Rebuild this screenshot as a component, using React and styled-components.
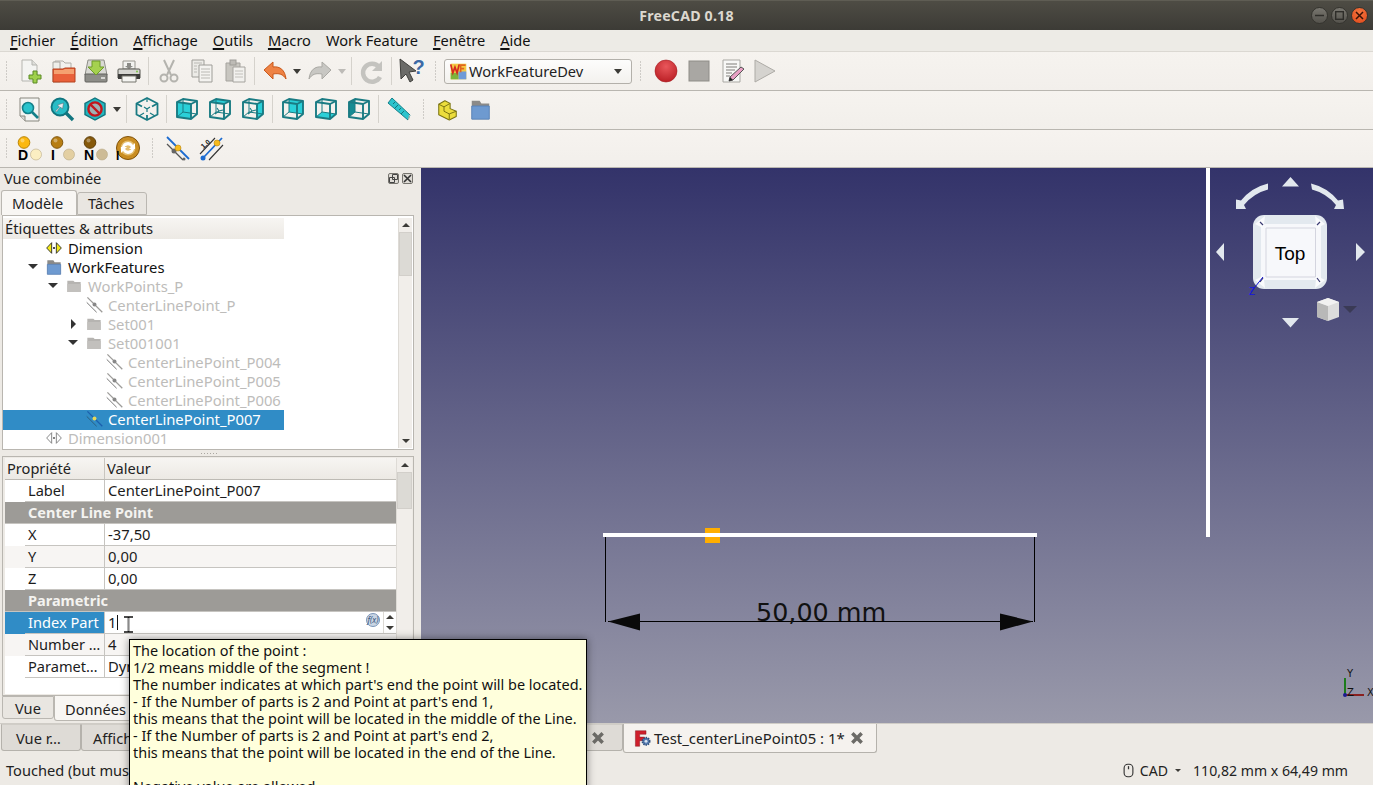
import React from 'react';
import styled, { createGlobalStyle } from 'styled-components';

const GlobalStyle = createGlobalStyle`
    html, body { margin: 0; padding: 0; background: #edeae5; }
    * { box-sizing: border-box; }
    body { font-family: "Noto Sans", "Open Sans", sans-serif; font-size: 14.6px; color: #1a1a1a; }
`;

const Window = styled.div`
    position: relative;
    width: 1373px;
    height: 785px;
    overflow: hidden;
    display: flex;
    flex-direction: column;
    background: #edeae5;
`;

/* title bar */
const TitleBar = styled.div`
    height: 30px;
    flex: none;
    display: grid;
    grid-template-columns: 1fr auto 1fr;
    align-items: center;
    background: linear-gradient(#4e4c44, #3c3b36);
    border-top: 1px solid #5f5d54;
`;
const TitleText = styled.div`
    grid-column: 2;
    color: #dcd8cf;
    font-weight: 700;
    font-size: 14.2px;
    letter-spacing: 0.2px;
`;
const WinButtons = styled.div`
    justify-self: end;
    display: flex;
    gap: 3px;
    padding-right: 5px;
`;
const WinButton = styled.div`
    width: 17px;
    height: 17px;
    border-radius: 50%;
    display: flex;
    align-items: center;
    justify-content: center;
    background: ${p => p.$close ? 'radial-gradient(circle at 50% 30%, #f4763f, #e0481a)' : 'linear-gradient(#78766f, #54524c)'};
    border: 1px solid #35342f;
`;

/* menu */
const MenuBar = styled.div`
    height: 22px;
    flex: none;
    display: flex;
    align-items: center;
    padding: 0 0 2px 10px;
    gap: 15px;
    background: #edebe6;
    border-bottom: 1px solid #dbd8d2;
`;
const MenuItem = styled.div`
    color: #111;
    line-height: 20px;
    u { text-decoration-thickness: 2px; text-underline-offset: 2px; }
`;

/* toolbars */
const Toolbar = styled.div`
    height: ${p => p.$h || 39}px;
    flex: none;
    display: flex;
    align-items: center;
    padding-bottom: ${p => p.$pb || 0}px;
    background: linear-gradient(#f6f3ef, #f2efeb);
    border-bottom: 1px solid #b9b6b0;
`;
const ToolButton = styled.div`
    width: 33px;
    height: 30px;
    flex: none;
    display: flex;
    align-items: center;
    justify-content: center;
`;
const ToolSep = styled.div`
    width: 7px;
    height: 28px;
    flex: none;
    display: flex;
    justify-content: center;
    &::before { content: ""; width: 1px; background: #d5d2cc; }
`;
const Grip = styled.div`
    width: ${p => p.$w || 14}px;
    height: 20px;
    flex: none;
    background-image: radial-gradient(circle, #a8a5a0 0.7px, transparent 0.9px);
    background-size: 3px 3px;
    background-repeat: repeat-y;
    background-position: center;
`;
const DropArrow = styled.div`
    width: 12px;
    flex: none;
    display: flex;
    justify-content: center;
    &::before {
        content: "";
        border-left: 4.5px solid transparent;
        border-right: 4.5px solid transparent;
        border-top: 5px solid ${p => p.$off ? '#bdbbb7' : '#3c3b37'};
    }
`;
const Combo = styled.div`
    width: 188px;
    height: 25px;
    margin-left: 2px;
    flex: none;
    display: flex;
    align-items: center;
    gap: 2px;
    padding: 0 9px 0 5px;
    border: 1px solid #b3b0aa;
    border-radius: 3px;
    background: linear-gradient(#fdfdfc, #f3f1ee);
    color: #222;
`;
const ComboLabel = styled.span`
    flex: 1;
`;
const ComboArrow = styled(DropArrow)`
    width: 9px;
`;
const Icon = styled.svg.attrs({ viewBox: '0 0 24 24' })`
    width: ${p => p.$s || 24}px;
    height: ${p => p.$s || 24}px;
    display: block;
    flex: none;
    overflow: visible;
`;

/* main area */
const Main = styled.div`
    flex: none;
    height: 555px;
    display: flex;
`;
const LeftPanel = styled.div`
    width: 421px;
    flex: none;
    display: flex;
    flex-direction: column;
    background: #edeae5;
`;
const DockHeader = styled.div`
    height: 22px;
    flex: none;
    display: flex;
    align-items: center;
    padding: 0 8px 2px 4px;
    color: #222;
`;
const DockTitle = styled.div`
    flex: 1;
`;
const DockBtn = styled.div`
    width: 11px;
    height: 11px;
    margin-left: 3px;
    display: flex;
    align-items: center;
    justify-content: center;
    border: 1px solid #77756f;
    border-radius: 2px;
    background: #dedbd5;
`;
const TabRow = styled.div`
    height: ${p => p.$h}px;
    flex: none;
    display: flex;
    align-items: ${p => p.$bottom ? 'flex-start' : 'flex-end'};
    padding-left: ${p => p.$pad}px;
`;
const Tab = styled.div`
    width: ${p => p.$w}px;
    height: ${p => p.$active ? 25 : 23}px;
    flex: none;
    display: flex;
    align-items: center;
    padding-left: ${p => p.$tx}px;
    border: 1px solid #bab7b1;
    background: ${p => p.$active ? '#f8f6f3' : '#e9e6e1'};
    color: #222;
    ${p => p.$bottom
        ? `border-top: ${p.$active ? 'none' : '1px solid #bab7b1'}; border-radius: 0 0 3px 3px; padding-top: ${p.$active ? 1 : 0}px;`
        : `border-bottom: ${p.$active ? 'none' : '1px solid #bab7b1'}; border-radius: 3px 3px 0 0; padding-bottom: 1px;`}
`;
const TreeBox = styled.div`
    height: 235px;
    flex: none;
    width: 412px;
    margin-left: 2px;
    display: flex;
    padding: 2px 1px 1px 0;
    border: 1px solid #b9b6b0;
    background: #fff;
    font-size: 14.8px;
`;
const TreeInner = styled.div`
    flex: 1;
    overflow: hidden;
`;
const TreeHead = styled.div`
    width: 281px;
    height: 21px;
    padding-left: 2px;
    line-height: 21px;
    background: linear-gradient(#f7f5f2, #ece9e4);
    color: #222;
`;
const TreeRow = styled.div`
    width: 281px;
    height: ${p => p.$selected ? 19.5 : 19}px;
    display: flex;
    align-items: center;
    padding-left: ${p => 23 + 20 * p.$depth}px;
    padding-bottom: 2px;
    background: ${p => p.$selected ? '#308cc6' : 'transparent'};
    color: ${p => p.$selected ? '#fff' : p.$dim ? '#bdbcba' : '#111'};
`;
const Twist = styled.div`
    width: 14px;
    flex: none;
    display: flex;
    justify-content: center;
    &::before {
        content: "";
        ${p => p.$kind === 'open' && `
            border-left: 5px solid transparent;
            border-right: 5px solid transparent;
            border-top: 5px solid #333;`}
        ${p => p.$kind === 'closed' && `
            border-top: 5px solid transparent;
            border-bottom: 5px solid transparent;
            border-left: 5px solid #333;`}
    }
`;
const TreeIcon = styled.div`
    width: 18px;
    margin: 0 5px;
    flex: none;
    display: flex;
    justify-content: center;
`;
const Scrollbar = styled.div`
    width: ${p => p.$w || 14}px;
    flex: none;
    display: flex;
    flex-direction: column;
    background: #f1eeea;
    border-left: 1px solid #dedbd6;
`;
const ScrollBtn = styled.div`
    height: 14px;
    flex: none;
    display: flex;
    align-items: center;
    justify-content: center;
    ${p => p.$end && 'margin-top: auto;'}
    &::before {
        content: "";
        border-left: 4px solid transparent;
        border-right: 4px solid transparent;
        ${p => p.$end ? 'border-top: 4px solid #3c3b37;' : 'border-bottom: 4px solid #3c3b37;'}
    }
`;
const ScrollThumb = styled.div`
    height: ${p => p.$h}px;
    flex: none;
    background: #dcdad5;
    border: 1px solid #d2cfca;
`;
const SplitGrip = styled.div`
    height: 6px;
    flex: none;
    display: flex;
    justify-content: center;
    align-items: center;
    &::before {
        content: "";
        width: 16px;
        height: 1px;
        margin-left: -4px;
        background-image: linear-gradient(90deg, #aaa7a1 1px, transparent 1px);
        background-size: 3px 1px;
    }
`;
const PropBox = styled.div`
    height: 240px;
    flex: none;
    width: 412px;
    margin-left: 2px;
    display: flex;
    padding: 1px 1px 1px 2px;
    border: 1px solid #b9b6b0;
    background: #edeae5;
`;
const PropTable = styled.div`
    flex: 1;
    background: #fff;
`;
const PropHead = styled.div`
    height: 22px;
    display: grid;
    grid-template-columns: 99px 1fr;
    background: linear-gradient(#f7f5f2, #ece9e4);
    border-bottom: 1px solid #bdbab4;
    color: #222;
    line-height: 21px;
`;
const HeadCell = styled.div`
    padding-left: 2px;
    & + & { border-left: 1px solid #c8c5bf; }
`;
const PropRow = styled.div`
    height: 22px;
    display: grid;
    grid-template-columns: 20px 79px 1fr;
    background: ${p => p.$alt ? '#f7f5f3' : '#fff'};
    color: #1c1c1c;
    line-height: 21px;
`;
const PropGutter = styled.div`
    background: ${p => p.$selected ? '#308cc6' : 'transparent'};
`;
const PropName = styled.div`
    padding-left: 3px;
    white-space: nowrap;
    overflow: hidden;
    border-bottom: 1px solid #c6c4c0;
    background: ${p => p.$selected ? '#308cc6' : 'transparent'};
    color: ${p => p.$selected ? '#fff' : 'inherit'};
`;
const PropValue = styled.div`
    display: flex;
    align-items: center;
    padding-left: 3px;
    border-left: 1px solid #c6c4c0;
    border-bottom: 1px solid #c6c4c0;
    white-space: nowrap;
    font-size: 14.8px;
    background: ${p => p.$editing ? '#fff' : 'transparent'};
`;
const Caret = styled.span`
    width: 1px;
    height: 15px;
    margin-left: 1px;
    background: #111;
`;
const Expr = styled.div`
    margin-left: auto;
    margin-right: 3px;
    margin-top: -5px;
    width: 14px;
    height: 14px;
    border-radius: 50%;
    border: 1px solid #7c96b8;
    background: #c9d5e4;
    color: #39557d;
    font-size: 8px;
    font-style: italic;
    line-height: 11px;
    text-align: center;
`;
const Spin = styled.div`
    width: 13px;
    height: 21px;
    flex: none;
    display: flex;
    flex-direction: column;
    justify-content: space-around;
    align-items: center;
    border-left: 1px solid #dcd9d4;
`;
const SpinArrow = styled.div`
    border-left: 4px solid transparent;
    border-right: 4px solid transparent;
    ${p => p.$down ? 'border-top: 4px solid #3c3b37;' : 'border-bottom: 4px solid #3c3b37;'}
`;
const GroupRow = styled.div`
    height: 22px;
    padding-left: 23px;
    background: #9d9b97;
    border-bottom: 1px solid #c6c4c0;
    color: #f4f3f0;
    font-weight: 700;
    font-size: 14.5px;
    line-height: 21px;
`;

/* 3D view */
const Viewport = styled.div`
    position: relative;
    flex: 1;
    overflow: hidden;
    background: linear-gradient(#33336a, #9999aa);
`;
const Scene = styled.svg`
    position: absolute;
    inset: 0;
    width: 100%;
    height: 100%;
`;

/* document tabs and status */
const DocTabs = styled.div`
    height: 32px;
    flex: none;
    display: flex;
    align-items: flex-start;
    padding-left: 1px;
    background: #edeae5;
    border-top: 1px solid #cfccc6;
`;
const DocTab = styled.div`
    width: ${p => p.$w}px;
    height: ${p => p.$active ? 29 : 27}px;
    flex: none;
    display: flex;
    align-items: center;
    gap: ${p => p.$active ? 3 : 0}px;
    padding: ${p => p.$active ? 0 : 1}px ${p => p.$active ? 12 : 0}px 0 ${p => p.$tx}px;
    background: ${p => p.$active ? '#f5f2ee' : '#dedbd6'};
    border: 1px solid #b5b2ac;
    border-top: ${p => p.$active ? 'none' : '1px solid #d0cdc7'};
    border-radius: 0 0 3px 3px;
    white-space: nowrap;
    overflow: hidden;
    color: #222;
    font-size: ${p => p.$active ? 14.9 : 14.6}px;
`;
const CloseMark = styled.div`
    margin-left: auto;
    flex: none;
`;
const CloseGap = styled.div`
    width: 17px;
    flex: none;
`;
const StatusBar = styled.div`
    flex: 1;
    display: flex;
    align-items: center;
    padding: 0 25px 0 6px;
    color: #222;
    font-size: 14.1px;
`;
const StatusText = styled.div`
    flex: 1;
    font-size: 14.6px;
`;
const StatusItem = styled.div`
    display: flex;
    align-items: center;
    gap: 4px;
    margin-left: ${p => p.$gap || 0}px;
`;
const StatusArrow = styled(DropArrow)`
    width: 20px;
    &::before {
        border-left-width: 3.5px;
        border-right-width: 3.5px;
        border-top-width: 3.5px;
    }
`;

const Tooltip = styled.div`
    position: absolute;
    left: 129px;
    top: 639px;
    width: 458px;
    height: 170px;
    padding: 2px 0 0 3px;
    background: #ffffdc;
    border: 1px solid #000;
    box-shadow: 0 0 8px rgba(0, 0, 0, 0.45);
    color: #111;
    font-size: 14.45px;
    line-height: 17px;
    white-space: pre-line;
`;
const Beam = styled.svg`
    position: absolute;
    left: 123px;
    top: 616px;
    width: 11px;
    height: 17px;
`;

/* toolbar icons */
const NewIcon = () => (
    <Icon>
        <path d="M4 1h10l5 5v16H4z" fill="#f4f4f2" stroke="#b5b5b0" />
        <path d="M14 1v5h5" fill="#dededa" stroke="#b5b5b0" />
        <path d="M15 12h4v4h4v4h-4v4h-4v-4h-4v-4h4z" fill="#9fd04c" stroke="#5b8a24" />
    </Icon>
);
const OpenIcon = () => (
    <Icon>
        <path d="M4 2h8l2 2h6v10H4z" fill="#f2f1ee" stroke="#b0aea8" />
        <path d="M2 3h7v20H2z" fill="#eeeeea" stroke="#a8a6a0" />
        <path d="M2 10h10l2 -1h10v14H2z" fill="#e9603a" stroke="#b4431f" />
        <path d="M3 11h9l2 -1h9v5H3z" fill="#f5a070" />
    </Icon>
);
const SaveIcon = () => (
    <Icon>
        <path d="M4 1h16l3 15H1z" fill="#d9d9d4" stroke="#8e8e88" />
        <path d="M1 15h22v7a1 1 0 0 1 -1 1H2a1 1 0 0 1 -1 -1z" fill="#8d8d88" stroke="#62625e" />
        <path d="M8 2h8v6h4l-8 8 -8 -8h4z" fill="#a5d14f" stroke="#6f9b2b" />
        <rect x="17" y="18" width="4" height="2" fill="#d6d6d2" />
    </Icon>
);
const PrintIcon = () => (
    <Icon>
        <path d="M6 2h12v8H6z" fill="#f2f2ef" stroke="#98968f" />
        <path d="M10 4h4v3h2l-4 3 -4 -3h2z" fill="#8a8a86" />
        <path d="M2 10h20a1 1 0 0 1 1 1v8H1v-8a1 1 0 0 1 1 -1z" fill="#d6d6d2" stroke="#55544f" />
        <path d="M1 15h22v5H1z" fill="#3c3c3a" />
        <path d="M5 17h14v6H5z" fill="#f4f4f1" stroke="#77766f" />
        <circle cx="20" cy="12.5" r="1" fill="#7cc34a" />
    </Icon>
);
const CutIcon = () => (
    <Icon>
        <g fill="none" stroke="#b4b3ae" strokeWidth="2">
            <path d="M7 1l7 15M17 1l-7 15" />
            <ellipse cx="7" cy="19" rx="3.5" ry="3.5" />
            <ellipse cx="17" cy="19" rx="3.5" ry="3.5" />
        </g>
    </Icon>
);
const CopyIcon = () => (
    <Icon>
        <path d="M2 1h12v17H2z" fill="#ecebe7" stroke="#9e9d98" />
        <path d="M9 6h13v17H9z" fill="#f4f3f0" stroke="#9e9d98" />
        <path d="M11 10h9M11 13h9M11 16h9M11 19h9M4 4h8M4 7h3M4 10h3M4 13h3" stroke="#bab9b4" />
    </Icon>
);
const PasteIcon = () => (
    <Icon>
        <path d="M3 4h14v18H3z" fill="#c8c6c0" stroke="#a5a39e" />
        <rect x="7" y="1" width="6" height="5" fill="#bdbbb6" stroke="#9e9c97" />
        <path d="M10 8h12v15H10z" fill="#f2f1ee" stroke="#a5a39e" />
        <path d="M12 12h8M12 15h8M12 18h8" stroke="#c2c0bb" />
    </Icon>
);
const ArrowBack = ({ fill, stroke }) => (
    <Icon>
        <path d="M1 11l9 -8v5c7 -1 12 3 13 12 -3 -5 -7 -6 -13 -5v5z" fill={fill} stroke={stroke} strokeLinejoin="round" />
    </Icon>
);
const ArrowForward = () => (
    <Icon>
        <path d="M23 11l-9 -8v5C7 7 2 11 1 20c3 -5 7 -6 13 -5v5z" fill="#c8c7c3" stroke="#aaa9a4" strokeLinejoin="round" />
    </Icon>
);
const ReloadIcon = () => (
    <Icon>
        <path d="M19 8a9 9 0 1 0 1 10" fill="none" stroke="#c4c3bf" strokeWidth="4.5" />
        <path d="M22 2v10H12z" fill="#c4c3bf" />
    </Icon>
);
const HelpIcon = () => (
    <Icon>
        <path d="M0 0l16 12 -7 1 4 8 -3 2 -4 -8 -5 5z" fill="#6b6b68" stroke="#3f3f3c" />
        <text x="12.5" y="15" fontFamily="Liberation Sans, sans-serif" fontSize="20" fontWeight="700" fill="#3d6aa5" stroke="#fff" strokeWidth="0.7" paintOrder="stroke">?</text>
    </Icon>
);
const WfLogo = () => (
    <Icon $s={17}>
        <rect x="1" y="1" width="22" height="22" fill="#f5c842" />
        <rect x="1" y="14" width="11" height="9" fill="#7db43c" />
        <rect x="12" y="12" width="11" height="11" fill="#6f9bd8" />
        <path d="M1 2l3 12 3 -8 3 8 3 -12" fill="none" stroke="#d42a1e" strokeWidth="2.4" />
        <path d="M22 3h-7v10M15 8h5" fill="none" stroke="#e0651e" strokeWidth="2.4" />
    </Icon>
);
const RecordIcon = () => (
    <Icon>
        <defs>
            <radialGradient id="rec" cx="50%" cy="30%" r="75%">
                <stop offset="0" stopColor="#e9575b" />
                <stop offset="1" stopColor="#b81c22" />
            </radialGradient>
        </defs>
        <circle cx="12" cy="12" r="11" fill="url(#rec)" stroke="#a51b20" strokeWidth="0.6" />
    </Icon>
);
const StopIcon = () => (
    <Icon>
        <rect x="2" y="2" width="20" height="20" fill="#a9a7a3" stroke="#8f8d88" />
    </Icon>
);
const NoteIcon = () => (
    <Icon>
        <path d="M3 1h17v22H3z" fill="#f8f8f6" stroke="#a9a8a3" />
        <path d="M6 5h11M6 8h11M6 11h9M6 14h6M6 17h4" stroke="#7e7d79" />
        <path d="M21 8l3 2 -11 11 -4 1 1 -4z" fill="#e8a0c4" stroke="#555" />
        <path d="M10 18l-1 4 4 -1z" fill="#222" />
    </Icon>
);
const PlayIcon = () => (
    <Icon>
        <path d="M2 1l20 11 -20 11z" fill="#d5d3cf" stroke="#adaba6" />
    </Icon>
);

const FitAllIcon = () => (
    <Icon>
        <path d="M3 1h19v23H8l-5 -5z" fill="#f4f4f2" stroke="#88877f" />
        <path d="M3 19h5v5" fill="#d8d8d4" stroke="#88877f" />
        <circle cx="11" cy="11" r="5.5" fill="#2bc3cc" stroke="#14808a" strokeWidth="1.6" />
        <path d="M15 15l6 6" stroke="#14808a" strokeWidth="2.6" />
    </Icon>
);
const FitSelIcon = () => (
    <Icon>
        <circle cx="10" cy="10" r="8.5" fill="#27bcc6" stroke="#11757f" strokeWidth="1.8" />
        <path d="M16 16l7 7" stroke="#11757f" strokeWidth="3.4" />
        <path d="M5.5 14l4 -4 -2 -2 6 -2 -1 6 -2 -2 -4 5z" fill="#e9eef2" stroke="#53656c" strokeWidth="0.5" />
    </Icon>
);
const DrawStyleIcon = () => (
    <Icon>
        <path d="M12 1l10 5.5v11L12 23 2 17.5v-11z" fill="#23b7c0" stroke="#11737c" strokeWidth="1.4" />
        <circle cx="12" cy="12" r="6.6" fill="#9fb1b4" stroke="#c3161c" strokeWidth="2.4" />
        <path d="M7.5 7.5l9 9" stroke="#c3161c" strokeWidth="2.4" />
    </Icon>
);
const IsoIcon = () => (
    <Icon>
        <g fill="none" stroke="#1a7b83" strokeWidth="1.8" strokeLinejoin="round">
            <path d="M12 1l10.5 5.5v11L12 23 1.5 17.5v-11z" />
            <path d="M1.5 6.5L7 9.5M22.5 6.5L17 9.5M12 23v-5" />
            <path d="M12 1v4M4 19l5 -3M20 19l-5 -3M12 12v3M9 10l3 2 3 -2" strokeWidth="1.2" />
        </g>
    </Icon>
);
const FACES = {
    front: '2,5 16,7 16,22 2,20',
    top: '2,5 8,2 22,4 16,7',
    right: '16,7 22,4 22,17 16,22',
    rear: '8,2 22,4 22,17 8,15',
    bottom: '2,20 8,15 22,17 16,22',
    left: '2,5 8,2 8,15 2,20',
};
const CubeIcon = ({ face }) => (
    <Icon>
        <polygon points={FACES[face]} fill={face === 'left' ? '#158b93' : '#2ad0d8'} />
        <g fill="none" stroke="#1a7b83" strokeLinejoin="round">
            <path d="M2 5l6 -3 14 2v13l-6 5 -14 -2z" strokeWidth="1.9" />
            <path d="M2 5l14 2 6 -3M16 7v15" strokeWidth="1.9" />
            <path d="M8 2v13M2 20l6 -5 14 2" strokeWidth="1" />
            {(face === 'top' || face === 'right') && <path d="M9 11l2 3 4 -1M11 14l-4 3" strokeWidth="1.1" />}
        </g>
    </Icon>
);
const RulerIcon = () => (
    <Icon>
        <path d="M5 1l18 17 -2 5L1 6z" fill="#2cc4cd" stroke="#168089" />
        <path d="M21 23l1 -5 1 0 -1 5z" fill="#c6c6c0" />
        <path d="M8 5l-2 2M11 8l-3 3M14 11l-2 2M17 14l-3 3" stroke="#14747c" />
    </Icon>
);
const PartIcon = () => (
    <Icon $s={21}>
        <path d="M2 6l7 -4 6 3v6l7 3v6l-8 4 -12 -6z" fill="#ecdd3c" stroke="#7a7312" strokeWidth="1.2" strokeLinejoin="round" />
        <path d="M2 6l6 3v5l6 3v6M8 9l7 -4M14 17l8 -3" fill="none" stroke="#7a7312" strokeWidth="1.1" />
    </Icon>
);
const BlueFolderIcon = ({ s }) => (
    <Icon $s={s}>
        <path d="M2 2h9l2 3h9v18H2z" fill="#8b8a88" />
        <path d="M2 8h20v15H2z" fill="#6e9ad0" stroke="#5681b8" />
    </Icon>
);
const Ball = ({ letter, top, dark, pale, cy = 6.5 }) => (
    <Icon>
        <circle cx="19" cy="18.5" r="5.5" fill={pale} stroke="#b9a988" strokeWidth="0.6" />
        <circle cx="7" cy={cy} r="5.8" fill={top} stroke={dark} />
        <circle cx="5.5" cy={cy - 2} r="2" fill="#fff" opacity="0.35" />
        <text x="1" y="24" fontFamily="Liberation Sans, sans-serif" fontWeight="700" fontSize="14" fill="#000">{letter}</text>
    </Icon>
);
const CycleIcon = () => (
    <Icon>
        <circle cx="12" cy="12" r="11.5" fill="#c98d22" stroke="#80520b" />
        <circle cx="12" cy="12" r="7.5" fill="#e4bd6c" />
        <path d="M6 11a6 6 0 0 1 11 -2l2 -2v6h-6l2 -2a4 4 0 0 0 -7 1zM18 13a6 6 0 0 1 -11 2l-2 2v-6h6l-2 2a4 4 0 0 0 7 -1z" fill="#fff" />
        <text x="0" y="24" fontFamily="Liberation Sans, sans-serif" fontWeight="700" fontSize="12" fill="#000">I</text>
    </Icon>
);
const LinePointIcon = () => (
    <Icon>
        <path d="M1 1l22 22" stroke="#1c6bd0" strokeWidth="1.8" />
        <path d="M1 8l16 16" stroke="#555" strokeWidth="1.2" />
        <circle cx="8" cy="15" r="2.5" fill="#666" />
        <circle cx="18" cy="23" r="1.5" fill="#666" />
        <circle cx="12" cy="12" r="3" fill="#f7bb1e" stroke="#b98610" strokeWidth="0.6" />
    </Icon>
);
const LineDistIcon = () => (
    <Icon>
        <path d="M4 22L23 2" stroke="#1c6bd0" strokeWidth="1.8" />
        <path d="M1 18L16 2M10 24L24 9" stroke="#333" strokeWidth="1.1" />
        <circle cx="4" cy="22" r="2.5" fill="#1c6bd0" />
        <circle cx="18" cy="7" r="3" fill="#f7bb1e" stroke="#b98610" strokeWidth="0.6" />
        <text x="2" y="11" fontSize="7" fontFamily="Liberation Sans, sans-serif" fontWeight="700" fill="#222" transform="rotate(-40 6 9)">1.0</text>
    </Icon>
);

/* tree icons */
const DimIcon = ({ dim }) => (
    <Icon $s={16}>
        <path d="M8.5 4L1 12l7.5 8zM15.5 4L23 12l-7.5 8z" fill={dim ? '#fff' : '#f4ea1a'} stroke={dim ? '#777' : '#222'} strokeWidth="1.3" />
        <circle cx="12" cy="12" r="1.6" fill={dim ? '#666' : '#222'} />
    </Icon>
);
const GreyFolderIcon = () => (
    <Icon $s={16}>
        <path d="M2 4h9l2 2h9v15H2z" fill="#b6b4b1" />
        <path d="M2 9h20v12H2z" fill="#c2c0bd" />
    </Icon>
);
const TreeLineIcon = ({ active }) => (
    <Icon $s={17}>
        <path d="M2 2l21 21" stroke={active ? '#1b5fae' : '#9d9c99'} strokeWidth="1.8" />
        <path d="M1 9l14 14" stroke={active ? '#2a5f7f' : '#777'} strokeWidth="1.4" />
        <circle cx="12" cy="12" r="2.8" fill={active ? '#e6d75a' : '#888'} />
    </Icon>
);
const CloseX = ({ color = '#6c6b67' }) => (
    <Icon $s={14}>
        <path d="M4 4l16 16M20 4L4 20" stroke={color} strokeWidth="6" />
    </Icon>
);
const FcadIcon = () => (
    <Icon $s={17}>
        <path d="M2 1h15v5H8v4h7v5H8v8H2z" fill="#cf1f2b" stroke="#7a1019" strokeWidth="0.6" />
        <circle cx="17" cy="16" r="5" fill="#5a80b5" stroke="#2f4f7d" strokeWidth="2.6" strokeDasharray="2 1.2" />
        <circle cx="17" cy="16" r="2" fill="#dbe4f0" />
    </Icon>
);
const MouseIcon = () => (
    <Icon $s={15}>
        <rect x="5" y="2" width="14" height="20" rx="6" fill="none" stroke="#333" strokeWidth="1.8" />
        <rect x="11" y="5" width="2" height="5" fill="#333" />
    </Icon>
);

/* the 3D scene, drawn in page coordinates */
const NavCube = () => (
    <g>
        <g fill="#e2e8ee">
            <path d="M1282 186.5l8.5 -9.5 8.5 9.5zM1282 318l8.5 9.5 8.5 -9.5zM1224 243v18l-8 -9zM1356 243v18l9 -9z" />
            <path d="M1268 183.5a50 50 0 0 0 -27 17l-5 -1 0 9.5 10 0 -2 -4a46 46 0 0 1 24 -15.5zM1311 183.5a50 50 0 0 1 27 17l5 -1 1 9.5 -10 0 2 -4a46 46 0 0 0 -24 -15.5z" />
        </g>
        <rect x="1253" y="215" width="74" height="74" rx="11" fill="#e3e9ef" />
        <rect x="1261" y="224" width="60" height="56" fill="#f7f8fb" />
        <path d="M1255 224l10 -8 -1 8 -1 4zM1325 224l-10 -8 1 8 1 4zM1255 280l10 8 -1 -8 -1 -4zM1325 280l-10 8 1 -8 1 -4z" fill="#fafbfd" />
        <path d="M1266 235v-7h9M1306 228h9.5v7M1266 269v8h9M1306 277h9.5v-8M1275 228h31M1275 277h31M1266 235v34M1315.5 235v34" fill="none" stroke="#d4d5df" strokeWidth="1" />
        <path d="M1260 222l3 3M1320 222l-3 3M1260 282l3 -4M1320 282l-3 -4" stroke="#3b3b72" strokeWidth="1.2" />
        <text x="1290" y="260" textAnchor="middle" fontFamily="Liberation Sans, sans-serif" fontSize="19" fill="#000">Top</text>
        <path d="M1263 277l-12 15" stroke="#1414d0" strokeWidth="1" />
        <text x="1249" y="295" fontFamily="Liberation Sans, sans-serif" fontSize="10" fill="#1414e0">Z</text>
        <path d="M1317 302l11 -4 11 4v15l-11 4 -11 -4z" fill="#dcdcdc" />
        <path d="M1317 302l11 4v15l-11 -4z" fill="#b8b8b8" />
        <path d="M1317 302l11 -4 11 4 -11 4z" fill="#f1f1f1" />
        <path d="M1343 306h14l-7 7z" fill="#3a3a55" />
    </g>
);
const Model = () => (
    <g>
        <rect x="1206" y="168" width="4" height="369" fill="#fff" />
        <rect x="705" y="528" width="15" height="15" fill="#ffae00" />
        <rect x="603" y="533" width="434" height="4" fill="#fff" />
        <path d="M605.5 537v85M1034.5 537v85M608 621.5h425" stroke="#000" strokeWidth="1" fill="none" />
        <path d="M608 621.5l32 -8v17zM1033 621.5l-33 -8v17z" fill="#0a0a0a" />
        <text x="756" y="621" fontFamily="DejaVu Sans, sans-serif" fontSize="25.4" fill="#111">50,00 mm</text>
    </g>
);
const AxisMark = () => (
    <g fontFamily="DejaVu Sans, sans-serif" fontSize="10" fill="#111">
        <path d="M1345 695v-17" stroke="#1c7c1c" strokeWidth="2" />
        <path d="M1345 695h19" stroke="#8a2020" strokeWidth="2" />
        <circle cx="1345" cy="695" r="2" fill="#1c1c90" />
        <text x="1347" y="677">Y</text>
        <text x="1347" y="696">Z</text>
        <text x="1367" y="696">X</text>
    </g>
);

const TREE = [
    { label: 'Dimension', depth: 0, icon: 'dim' },
    { label: 'WorkFeatures', depth: 0, icon: 'folder', twist: 'open' },
    { label: 'WorkPoints_P', depth: 1, icon: 'grey', twist: 'open', dim: true },
    { label: 'CenterLinePoint_P', depth: 2, icon: 'line', dim: true },
    { label: 'Set001', depth: 2, icon: 'grey', twist: 'closed', dim: true },
    { label: 'Set001001', depth: 2, icon: 'grey', twist: 'open', dim: true },
    { label: 'CenterLinePoint_P004', depth: 3, icon: 'line', dim: true },
    { label: 'CenterLinePoint_P005', depth: 3, icon: 'line', dim: true },
    { label: 'CenterLinePoint_P006', depth: 3, icon: 'line', dim: true },
    { label: 'CenterLinePoint_P007', depth: 2, icon: 'line', selected: true },
    { label: 'Dimension001', depth: 0, icon: 'dim', dim: true },
];

const treeIcon = row => {
    if (row.icon === 'dim') return <DimIcon dim={row.dim} />;
    if (row.icon === 'folder') return <BlueFolderIcon s={16} />;
    if (row.icon === 'grey') return <GreyFolderIcon />;
    return <TreeLineIcon active={row.selected} />;
};

const TIP = `The location of the point :
1/2 means middle of the segment !
The number indicates at which part's end the point will be located.
- If the Number of parts is 2 and Point at part's end 1,
this means that the point will be located in the middle of the Line.
- If the Number of parts is 2 and Point at part's end 2,
this means that the point will be located in the end of the Line.

Negative value are allowed`;

const App = () => {
    return (
        <Window>
            <GlobalStyle />
            <TitleBar>
                <TitleText>FreeCAD 0.18</TitleText>
                <WinButtons>
                    <WinButton><svg width="9" height="9"><path d="M0 4.5h9" stroke="#2e2d29" strokeWidth="1.5" /></svg></WinButton>
                    <WinButton><svg width="9" height="9"><rect x="0.7" y="0.7" width="7.6" height="7.6" fill="none" stroke="#2e2d29" strokeWidth="1.4" /></svg></WinButton>
                    <WinButton $close><svg width="9" height="9"><path d="M1 1l7 7M8 1L1 8" stroke="#3b1206" strokeWidth="1.5" /></svg></WinButton>
                </WinButtons>
            </TitleBar>

            <MenuBar>
                <MenuItem><u>F</u>ichier</MenuItem>
                <MenuItem><u>É</u>dition</MenuItem>
                <MenuItem><u>A</u>ffichage</MenuItem>
                <MenuItem><u>O</u>utils</MenuItem>
                <MenuItem><u>M</u>acro</MenuItem>
                <MenuItem>Work Feature</MenuItem>
                <MenuItem><u>F</u>enêtre</MenuItem>
                <MenuItem><u>A</u>ide</MenuItem>
            </MenuBar>

            <Toolbar>
                <Grip $w={13} />
                <ToolButton><NewIcon /></ToolButton>
                <ToolButton><OpenIcon /></ToolButton>
                <ToolButton><SaveIcon /></ToolButton>
                <ToolButton><PrintIcon /></ToolButton>
                <ToolSep />
                <ToolButton><CutIcon /></ToolButton>
                <ToolButton><CopyIcon /></ToolButton>
                <ToolButton><PasteIcon /></ToolButton>
                <ToolSep />
                <ToolButton><ArrowBack fill="#ee8244" stroke="#c9591c" /></ToolButton>
                <DropArrow />
                <ToolButton><ArrowForward /></ToolButton>
                <DropArrow $off />
                <ToolSep />
                <ToolButton><ReloadIcon /></ToolButton>
                <ToolSep />
                <ToolButton><HelpIcon /></ToolButton>
                <Grip $w={14} />
                <Combo>
                    <WfLogo />
                    <ComboLabel>WorkFeatureDev</ComboLabel>
                    <ComboArrow />
                </Combo>
                <Grip $w={17} />
                <ToolButton><RecordIcon /></ToolButton>
                <ToolButton><StopIcon /></ToolButton>
                <ToolButton><NoteIcon /></ToolButton>
                <ToolButton><PlayIcon /></ToolButton>
            </Toolbar>

            <Toolbar $pb={2}>
                <Grip $w={12} />
                <ToolButton><FitAllIcon /></ToolButton>
                <ToolButton><FitSelIcon /></ToolButton>
                <ToolButton><DrawStyleIcon /></ToolButton>
                <DropArrow />
                <ToolSep />
                <ToolButton><IsoIcon /></ToolButton>
                <ToolSep />
                <ToolButton><CubeIcon face="front" /></ToolButton>
                <ToolButton><CubeIcon face="top" /></ToolButton>
                <ToolButton><CubeIcon face="right" /></ToolButton>
                <ToolSep />
                <ToolButton><CubeIcon face="rear" /></ToolButton>
                <ToolButton><CubeIcon face="bottom" /></ToolButton>
                <ToolButton><CubeIcon face="left" /></ToolButton>
                <ToolSep />
                <ToolButton><RulerIcon /></ToolButton>
                <Grip $w={16} />
                <ToolButton><PartIcon /></ToolButton>
                <ToolButton><BlueFolderIcon s={21} /></ToolButton>
            </Toolbar>

            <Toolbar $h={38} $pb={2}>
                <Grip $w={12} />
                <ToolButton><Ball letter="D" top="#fbb80e" dark="#bb8300" pale="#fbeec2" /></ToolButton>
                <ToolButton><Ball letter="I" top="#b77d12" dark="#7f5407" pale="#e3cfa2" /></ToolButton>
                <ToolButton><Ball letter="N" top="#86590b" dark="#5c3c05" pale="#cdbb96" /></ToolButton>
                <ToolButton><CycleIcon /></ToolButton>
                <Grip $w={17} />
                <ToolButton><LinePointIcon /></ToolButton>
                <ToolButton><LineDistIcon /></ToolButton>
            </Toolbar>

            <Main>
                <LeftPanel>
                    <DockHeader>
                        <DockTitle>Vue combinée</DockTitle>
                        <DockBtn>
                            <svg width="9" height="9"><path d="M3.5 0.5h5v5h-5zM0.5 3.5h5v5h-5z" fill="none" stroke="#444" /></svg>
                        </DockBtn>
                        <DockBtn>
                            <svg width="9" height="9"><path d="M1 1l7 7M8 1L1 8" stroke="#333" strokeWidth="1.6" /></svg>
                        </DockBtn>
                    </DockHeader>
                    <TabRow $h={25} $pad={1}>
                        <Tab $active $w={76} $tx={10}>Modèle</Tab>
                        <Tab $w={70} $tx={10}>Tâches</Tab>
                    </TabRow>
                    <TreeBox>
                        <TreeInner>
                            <TreeHead>Étiquettes &amp; attributs</TreeHead>
                            {TREE.map(row => (
                                <TreeRow key={row.label} $depth={row.depth} $dim={row.dim} $selected={row.selected}>
                                    <Twist $kind={row.twist} />
                                    <TreeIcon>{treeIcon(row)}</TreeIcon>
                                    {row.label}
                                </TreeRow>
                            ))}
                        </TreeInner>
                        <Scrollbar>
                            <ScrollBtn />
                            <ScrollThumb $h={44} />
                            <ScrollBtn $end />
                        </Scrollbar>
                    </TreeBox>
                    <SplitGrip />
                    <PropBox>
                        <PropTable>
                            <PropHead>
                                <HeadCell>Propriété</HeadCell>
                                <HeadCell>Valeur</HeadCell>
                            </PropHead>
                            <PropRow><PropGutter /><PropName>Label</PropName><PropValue>CenterLinePoint_P007</PropValue></PropRow>
                            <GroupRow>Center Line Point</GroupRow>
                            <PropRow><PropGutter /><PropName>X</PropName><PropValue>-37,50</PropValue></PropRow>
                            <PropRow $alt><PropGutter /><PropName>Y</PropName><PropValue>0,00</PropValue></PropRow>
                            <PropRow><PropGutter /><PropName>Z</PropName><PropValue>0,00</PropValue></PropRow>
                            <GroupRow>Parametric</GroupRow>
                            <PropRow>
                                <PropGutter $selected />
                                <PropName $selected>Index Part</PropName>
                                <PropValue $editing>
                                    1<Caret />
                                    <Expr>f(x)</Expr>
                                    <Spin><SpinArrow /><SpinArrow $down /></Spin>
                                </PropValue>
                            </PropRow>
                            <PropRow $alt><PropGutter /><PropName>Number …</PropName><PropValue>4</PropValue></PropRow>
                            <PropRow><PropGutter /><PropName>Paramet…</PropName><PropValue>Dynamic</PropValue></PropRow>
                        </PropTable>
                        <Scrollbar $w={16}>
                            <ScrollBtn />
                            <ScrollThumb $h={37} />
                        </Scrollbar>
                    </PropBox>
                    <TabRow $h={28} $pad={2} $bottom>
                        <Tab $bottom $w={52} $tx={12}>Vue</Tab>
                        <Tab $bottom $active $w={90} $tx={10}>Données</Tab>
                    </TabRow>
                </LeftPanel>
                <Viewport>
                    <Scene viewBox="421 168 952 555" preserveAspectRatio="none">
                        <Model />
                        <NavCube />
                        <AxisMark />
                    </Scene>
                </Viewport>
            </Main>

            <DocTabs>
                <DocTab $w={80} $tx={14}>Vue r…</DocTab>
                <DocTab $w={240} $tx={11}>Affichage</DocTab>
                <DocTab $w={302} $tx={10}>
                    <CloseMark><CloseX /></CloseMark>
                    <CloseGap />
                </DocTab>
                <DocTab $active $w={254} $tx={10}>
                    <FcadIcon />
                    Test_centerLinePoint05 : 1*
                    <CloseMark><CloseX /></CloseMark>
                </DocTab>
            </DocTabs>

            <StatusBar>
                <StatusText>Touched (but must be executed)</StatusText>
                <StatusItem><MouseIcon />CAD</StatusItem>
                <StatusArrow />
                <StatusItem $gap={5}>110,82 mm x 64,49 mm</StatusItem>
            </StatusBar>

            <Beam viewBox="0 0 11 17">
                <path d="M1 1h9M1 16h9M5.5 1v15" stroke="#111" strokeWidth="1.6" fill="none" />
                <path d="M5.5 2v13" stroke="#ddd" strokeWidth="0.6" />
            </Beam>
            <Tooltip>{TIP}</Tooltip>
        </Window>
    );
};

export default App;
